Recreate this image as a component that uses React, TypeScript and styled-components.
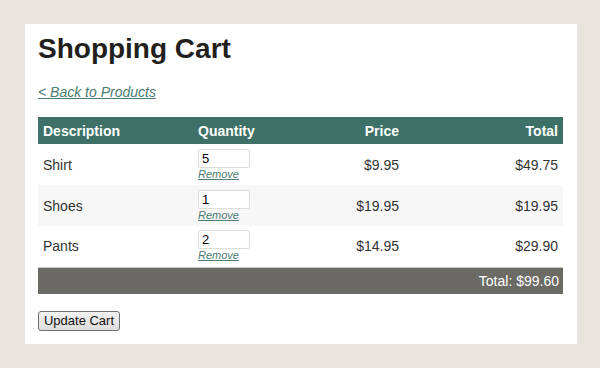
import styled, { createGlobalStyle } from "styled-components";

type Item = {
  name: string;
  qty: number;
  price: number;
};

const items: Item[] = [
  { name: "Shirt", qty: 5, price: 9.95 },
  { name: "Shoes", qty: 1, price: 19.95 },
  { name: "Pants", qty: 2, price: 14.95 },
];

const money = (n: number) => "$" + n.toFixed(2);

function App() {
  const total = items.reduce((sum, item) => sum + item.qty * item.price, 0);

  return (
    <>
      <GlobalStyle />
      <Panel>
        <Title>Shopping Cart</Title>
        <BackLink href="#">&lt; Back to Products</BackLink>
        <CartTable>
          <thead>
            <tr>
              <HeadCell $width={155}>Description</HeadCell>
              <HeadCell $width={111}>Quantity</HeadCell>
              <HeadCell $width={100} $right>
                Price
              </HeadCell>
              <HeadCell $width={159} $right>
                Total
              </HeadCell>
            </tr>
          </thead>
          <tbody>
            {items.map((item, i) => (
              <ItemRow key={item.name} $alt={i % 2 === 1}>
                <Cell>{item.name}</Cell>
                <Cell>
                  <QtyInput type="text" defaultValue={item.qty} />
                  <RemoveLink href="#">Remove</RemoveLink>
                </Cell>
                <Cell $right>{money(item.price)}</Cell>
                <Cell $right>{money(item.qty * item.price)}</Cell>
              </ItemRow>
            ))}
          </tbody>
          <tfoot>
            <tr>
              <FootCell colSpan={4}>Total: {money(total)}</FootCell>
            </tr>
          </tfoot>
        </CartTable>
        <UpdateButton>Update Cart</UpdateButton>
      </Panel>
    </>
  );
}

const GlobalStyle = createGlobalStyle`
  body {
    margin: 0;
    background-color: #e8e5df;
    font-family: "Liberation Sans", Arial, sans-serif;
  }
`;

const Panel = styled.div`
  margin: 24px 0 0 25px;
  width: 552px;
  height: 320px;
  box-sizing: border-box;
  padding: 9px 13px 0 13px;
  background-color: #ffffff;
`;

const Title = styled.h1`
  margin: 0;
  font-size: 28px;
  line-height: 32px;
  font-weight: bold;
  color: #231f1c;
`;

const BackLink = styled.a`
  display: inline-block;
  margin-top: 19px;
  font-size: 14px;
  line-height: 16px;
  font-style: italic;
  color: #4b7b73;
  text-decoration: underline;
`;

const CartTable = styled.table`
  margin-top: 16px;
  width: 525px;
  border-collapse: collapse;
  table-layout: fixed;
  font-size: 14px;
`;

const HeadCell = styled.th<{ $width: number; $right?: boolean }>`
  width: ${(p) => p.$width}px;
  height: 27px;
  padding: 0 5px;
  box-sizing: border-box;
  background-color: #3d7067;
  color: #ffffff;
  font-weight: bold;
  text-align: ${(p) => (p.$right ? "right" : "left")};
`;

const ItemRow = styled.tr<{ $alt: boolean }>`
  height: 41px;
  background-color: ${(p) => (p.$alt ? "#f7f7f7" : "#ffffff")};
`;

const Cell = styled.td<{ $right?: boolean }>`
  padding: 0 5px;
  color: #333333;
  vertical-align: middle;
  text-align: ${(p) => (p.$right ? "right" : "left")};
`;

const QtyInput = styled.input`
  display: block;
  width: 52px;
  height: 19px;
  box-sizing: border-box;
  margin: 0;
  padding: 0 3px;
  border: 1px solid #dcdcdc;
  border-radius: 2px;
  font-family: "Liberation Sans", Arial, sans-serif;
  font-size: 13px;
  color: #000000;
`;

const RemoveLink = styled.a`
  display: block;
  font-size: 11px;
  line-height: 13px;
  font-style: italic;
  color: #4b7b73;
  text-decoration: underline;
`;

const FootCell = styled.td`
  height: 26px;
  padding: 0 4px 0 5px;
  border-top: 1px solid #c9c8c3;
  background-color: #6b6a64;
  color: #ffffff;
  text-align: right;
`;

const UpdateButton = styled.button`
  display: block;
  margin-top: 17px;
  width: 82px;
  height: 20px;
  padding: 0;
  border: 1px solid #707070;
  border-radius: 3px;
  background: linear-gradient(#f2f2f2, #dddddd);
  font-family: "Liberation Sans", Arial, sans-serif;
  font-size: 13px;
  color: #111111;
`;

export default App;
